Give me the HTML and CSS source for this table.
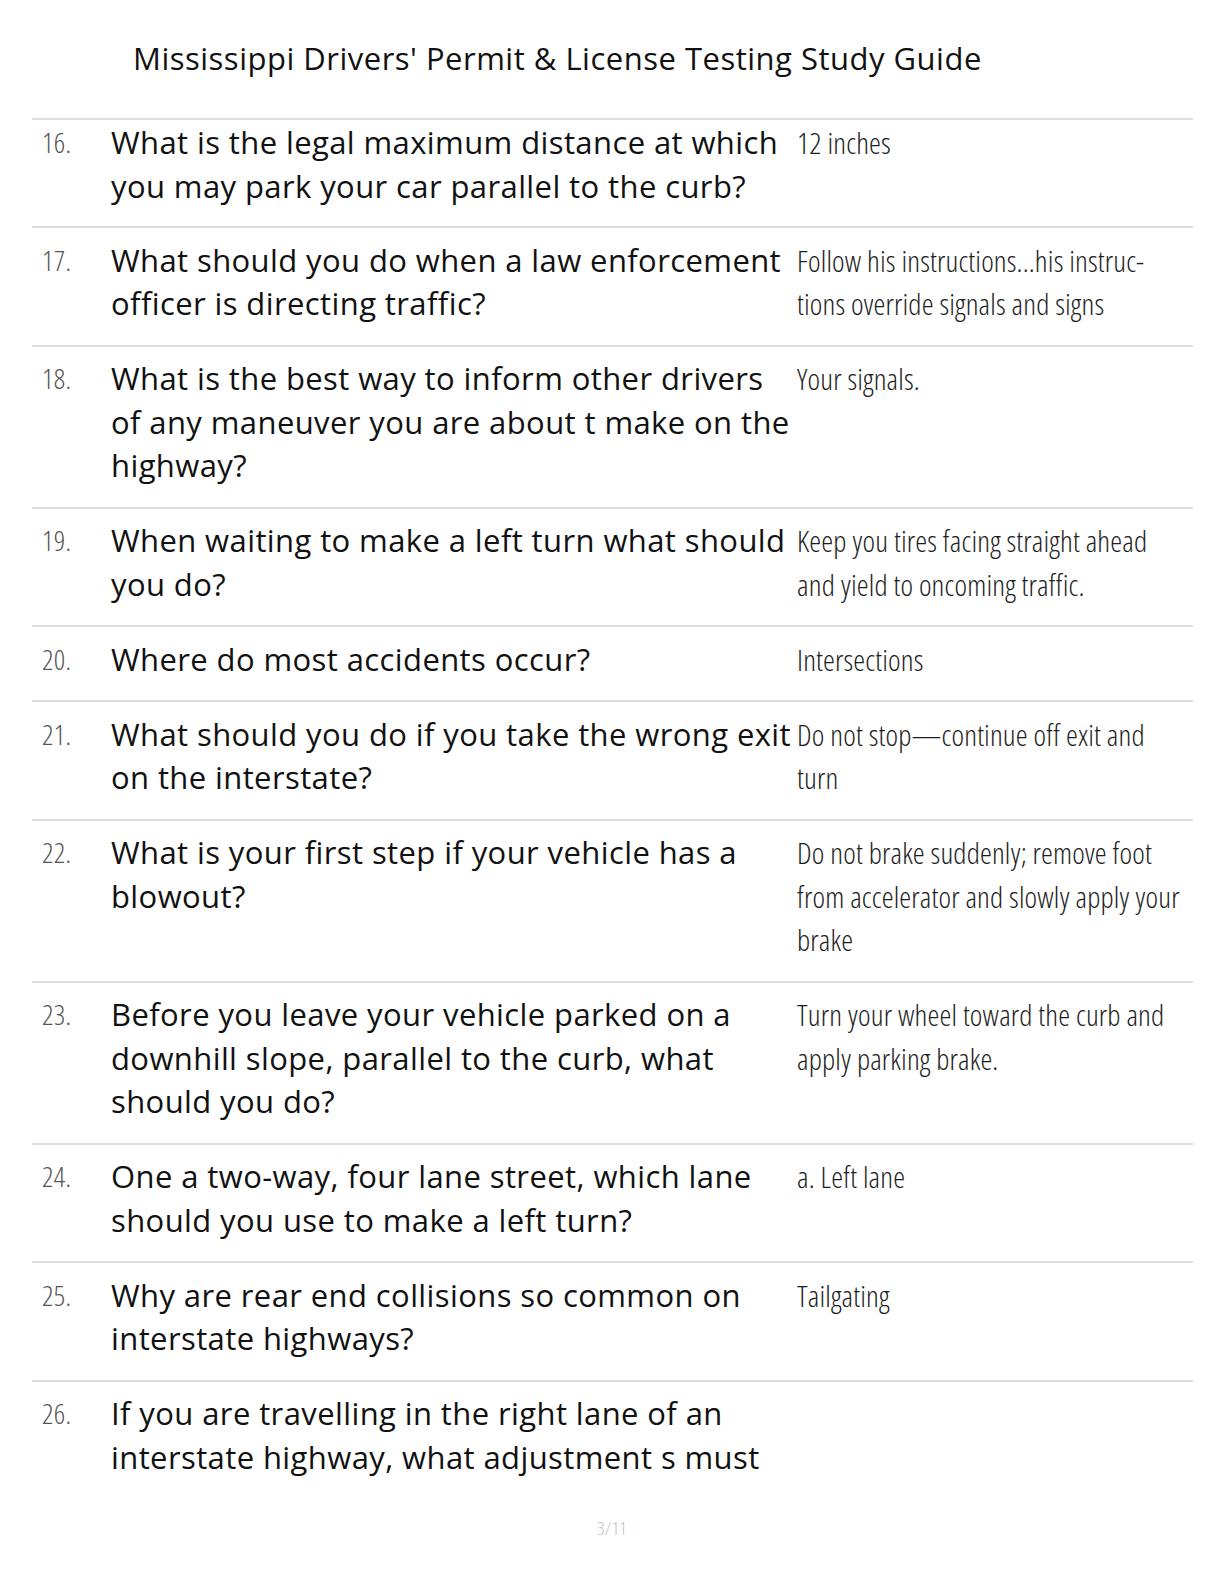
FILE: index.html
```html
<!DOCTYPE html>
<html lang="en">
<head>
<meta charset="utf-8">
<title>Mississippi Drivers' Permit &amp; License Testing Study Guide</title>
<link rel="stylesheet" href="styles.css">
</head>
<body>
<div class="page">
  <h1 class="title">Mississippi Drivers' Permit &amp; License Testing Study Guide</h1>
  <div class="list">
    <div class="row first">
      <div class="num">16.</div>
      <div class="q">What is the legal maximum distance at which<br>you may park your car parallel to the curb?</div>
      <div class="a">12 inches</div>
    </div>
    <div class="row">
      <div class="num">17.</div>
      <div class="q">What should you do when a law enforcement<br>officer is directing traffic?</div>
      <div class="a">Follow his instructions...his instruc-<br>tions override signals and signs</div>
    </div>
    <div class="row">
      <div class="num">18.</div>
      <div class="q">What is the best way to inform other drivers<br>of any maneuver you are about t make on the<br>highway?</div>
      <div class="a">Your signals.</div>
    </div>
    <div class="row">
      <div class="num">19.</div>
      <div class="q">When waiting to make a left turn what should<br>you do?</div>
      <div class="a">Keep you tires facing straight ahead<br>and yield to oncoming traffic.</div>
    </div>
    <div class="row">
      <div class="num">20.</div>
      <div class="q">Where do most accidents occur?</div>
      <div class="a">Intersections</div>
    </div>
    <div class="row">
      <div class="num">21.</div>
      <div class="q">What should you do if you take the wrong exit<br>on the interstate?</div>
      <div class="a">Do not stop—continue off exit and<br>turn</div>
    </div>
    <div class="row">
      <div class="num">22.</div>
      <div class="q">What is your first step if your vehicle has a<br>blowout?</div>
      <div class="a">Do not brake suddenly; remove foot<br>from accelerator and slowly apply your<br>brake</div>
    </div>
    <div class="row">
      <div class="num">23.</div>
      <div class="q">Before you leave your vehicle parked on a<br>downhill slope, parallel to the curb, what<br>should you do?</div>
      <div class="a">Turn your wheel toward the curb and<br>apply parking brake.</div>
    </div>
    <div class="row">
      <div class="num">24.</div>
      <div class="q">One a two-way, four lane street, which lane<br>should you use to make a left turn?</div>
      <div class="a">a. Left lane</div>
    </div>
    <div class="row">
      <div class="num">25.</div>
      <div class="q">Why are rear end collisions so common on<br>interstate highways?</div>
      <div class="a">Tailgating</div>
    </div>
    <div class="row last">
      <div class="num">26.</div>
      <div class="q">If you are travelling in the right lane of an<br>interstate highway, what adjustment s must</div>
      <div class="a"></div>
    </div>
  </div>
  <div class="pageno">3/11</div>
</div>
</body>
</html>
```
FILE: styles.css
```css
html, body {
  margin: 0;
  padding: 0;
  background: #ffffff;
}

.page {
  width: 1224px;
  height: 1584px;
  overflow: hidden;
  font-family: "Open Sans", "Noto Sans", sans-serif;
  color: #111;
}

.title {
  margin: 38px 0 0 133px;
  font-size: 31px;
  font-weight: 400;
  letter-spacing: 0.5px;
  line-height: 40px;
  white-space: nowrap;
  color: #111;
}

.list {
  margin: 40px 31px 0 32px;
}

.row {
  display: grid;
  grid-template-columns: 79px 678px 1fr;
  border-top: 2px solid #dcdce2;
  padding: 10.5px 0 19px;
  line-height: 43.5px;
}

.row.first {
  padding-top: 1px;
  padding-bottom: 18px;
}

.row.last {
  padding-bottom: 0;
}

.num {
  padding-left: 10px;
  font-family: "Open Sans", sans-serif;
  font-stretch: 75%;
  font-weight: 300;
  font-size: 28px;
  letter-spacing: 0.3px;
  color: #555;
}

.q {
  font-size: 31px;
  letter-spacing: 0.4px;
  white-space: nowrap;
  color: #111;
}

.a {
  padding-left: 8px;
  font-family: "Open Sans", sans-serif;
  font-stretch: 75%;
  font-weight: 300;
  font-size: 30px;
  letter-spacing: 0.15px;
  white-space: nowrap;
  color: #1e1e1e;
}

.pageno {
  margin-top: 36px;
  text-align: center;
  font-family: "Open Sans", sans-serif;
  font-stretch: 75%;
  font-weight: 300;
  font-size: 19px;
  color: #c4c4c8;
}
```
